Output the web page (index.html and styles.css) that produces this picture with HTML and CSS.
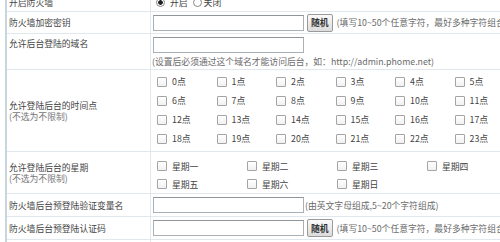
FILE: index.html
```html
<!DOCTYPE html>
<html lang="zh-CN">
<head>
  <meta charset="UTF-8" />
  <title>防火墙设置</title>
  <link rel="stylesheet" href="styles.css">
</head>
<body>

  <div class="form">
    <div class="row r1">
      <div class="label">开启防火墙</div>
      <div class="value">
        <label class="radio"><input type="radio" name="open" checked>开启</label>
        <label class="radio"><input type="radio" name="open">关闭</label>
      </div>
    </div>

    <div class="row h22">
      <div class="label">防火墙加密密钥</div>
      <div class="value">
        <input type="text" class="text">
        <button class="btn">随机</button>
        <span class="hint">(填写10~50个任意字符，最好多种字符组合)</span>
      </div>
    </div>

    <div class="row">
      <div class="label top">允许后台登陆的域名</div>
      <div class="value stack">
        <input type="text" class="text">
        <span class="hint">(设置后必须通过这个域名才能访问后台，如：http://admin.phome.net)</span>
      </div>
    </div>

    <div class="row">
      <div class="label"><span>允许登陆后台的时间点</span><span class="sub">(不选为不限制)</span></div>
      <div class="value">
        <div class="hours">
          <label class="check"><input type="checkbox">0点</label>
          <label class="check"><input type="checkbox">1点</label>
          <label class="check"><input type="checkbox">2点</label>
          <label class="check"><input type="checkbox">3点</label>
          <label class="check"><input type="checkbox">4点</label>
          <label class="check"><input type="checkbox">5点</label>
          <label class="check"><input type="checkbox">6点</label>
          <label class="check"><input type="checkbox">7点</label>
          <label class="check"><input type="checkbox">8点</label>
          <label class="check"><input type="checkbox">9点</label>
          <label class="check"><input type="checkbox">10点</label>
          <label class="check"><input type="checkbox">11点</label>
          <label class="check"><input type="checkbox">12点</label>
          <label class="check"><input type="checkbox">13点</label>
          <label class="check"><input type="checkbox">14点</label>
          <label class="check"><input type="checkbox">15点</label>
          <label class="check"><input type="checkbox">16点</label>
          <label class="check"><input type="checkbox">17点</label>
          <label class="check"><input type="checkbox">18点</label>
          <label class="check"><input type="checkbox">19点</label>
          <label class="check"><input type="checkbox">20点</label>
          <label class="check"><input type="checkbox">21点</label>
          <label class="check"><input type="checkbox">22点</label>
          <label class="check"><input type="checkbox">23点</label>
        </div>
      </div>
    </div>

    <div class="row">
      <div class="label"><span>允许登陆后台的星期</span><span class="sub">(不选为不限制)</span></div>
      <div class="value">
        <div class="weeks">
          <label class="check"><input type="checkbox">星期一</label>
          <label class="check"><input type="checkbox">星期二</label>
          <label class="check"><input type="checkbox">星期三</label>
          <label class="check"><input type="checkbox">星期四</label>
          <label class="check"><input type="checkbox">星期五</label>
          <label class="check"><input type="checkbox">星期六</label>
          <label class="check"><input type="checkbox">星期日</label>
        </div>
      </div>
    </div>

    <div class="row h23">
      <div class="label">防火墙后台预登陆验证变量名</div>
      <div class="value">
        <input type="text" class="text">
        <span class="hint">(由英文字母组成,5~20个字符组成)</span>
      </div>
    </div>

    <div class="row h23">
      <div class="label">防火墙后台预登陆认证码</div>
      <div class="value">
        <input type="text" class="text">
        <button class="btn">随机</button>
        <span class="hint">(填写10~50个任意字符，最好多种字符组合)</span>
      </div>
    </div>

    <div class="row h23">
      <div class="label">防火墙后台预登陆问题</div>
      <div class="value">
        <input type="text" class="text">
      </div>
    </div>
  </div>

</body>
</html>
```

FILE: styles.css
```css
body {
  margin: 0;
  background: #ffffff;
  font-family: "Noto Sans CJK SC", "Noto Sans", sans-serif;
  font-size: 8.8px;
  color: #444;
  overflow: hidden;
}
.form {
  margin: -7px 0 0 5px;
  border-left: 2px solid #c8d6df;
  width: 600px;
}
.row {
  display: flex;
  box-sizing: border-box;
  border-bottom: 1px solid #e0e8ee;
}
.r1 {
  height: 19px;
}
.h22 {
  height: 22px;
}
.h23 {
  height: 23px;
}
.label {
  box-sizing: border-box;
  width: 144px;
  flex: none;
  padding-left: 2px;
  border-right: 1px solid #e0e8ee;
  display: flex;
  flex-direction: column;
  justify-content: center;
  line-height: 11px;
  white-space: nowrap;
}
.label span {
  display: block;
  height: 11px;
}
.label.top {
  justify-content: flex-start;
  padding-top: 4px;
}
.sub {
  color: #777;
}
.value {
  flex: 1;
  padding-left: 2px;
  display: flex;
  align-items: center;
  white-space: nowrap;
}
.value.stack {
  flex-direction: column;
  align-items: flex-start;
  padding-top: 3px;
  padding-bottom: 2px;
  line-height: 11px;
}
.text {
  box-sizing: border-box;
  width: 151px;
  height: 16px;
  margin: 0;
  padding: 0 2px;
  border: 1px solid #a9b0b6;
  border-top-color: #8e969c;
  background: #fff;
}
.btn {
  box-sizing: border-box;
  height: 18px;
  margin: 0 3px;
  padding: 0 3px;
  border: 1px solid #9a9a9a;
  border-radius: 2px;
  background: linear-gradient(#fafafa, #dcdcdc);
  font-family: inherit;
  font-size: 8.8px;
  font-weight: bold;
  color: #333;
}
.hint {
  color: #6b6b6b;
  margin-left: 1px;
}
.stack .hint {
  margin: 3px 0 0 -1px;
}
.radio {
  display: flex;
  align-items: center;
}
.radio input {
  appearance: none;
  box-sizing: border-box;
  width: 9px;
  height: 9px;
  margin: 0 5px 0 3px;
  border: 1px solid #888;
  border-radius: 50%;
  background: #fff;
}
.radio input:checked {
  background: radial-gradient(circle, #222 0 2px, #fff 2.6px);
}
.radio + .radio input {
  margin: 0 2px 0 5px;
}
.hours, .weeks {
  display: grid;
  padding-left: 4px;
}
.hours {
  grid-template-columns: repeat(6, 59.5px);
  grid-auto-rows: 19px;
  padding-top: 2px;
  padding-bottom: 3px;
}
.weeks {
  grid-template-columns: repeat(4, 90px);
  grid-auto-rows: 18px;
  padding-top: 5px;
}
.check {
  display: flex;
  align-items: center;
  gap: 5px;
}
.check input {
  appearance: none;
  box-sizing: border-box;
  width: 10px;
  height: 10px;
  margin: 0;
  border: 1px solid #a4a4a4;
  border-radius: 1px;
  background: linear-gradient(#fff, #f1f1f1);
}
```
